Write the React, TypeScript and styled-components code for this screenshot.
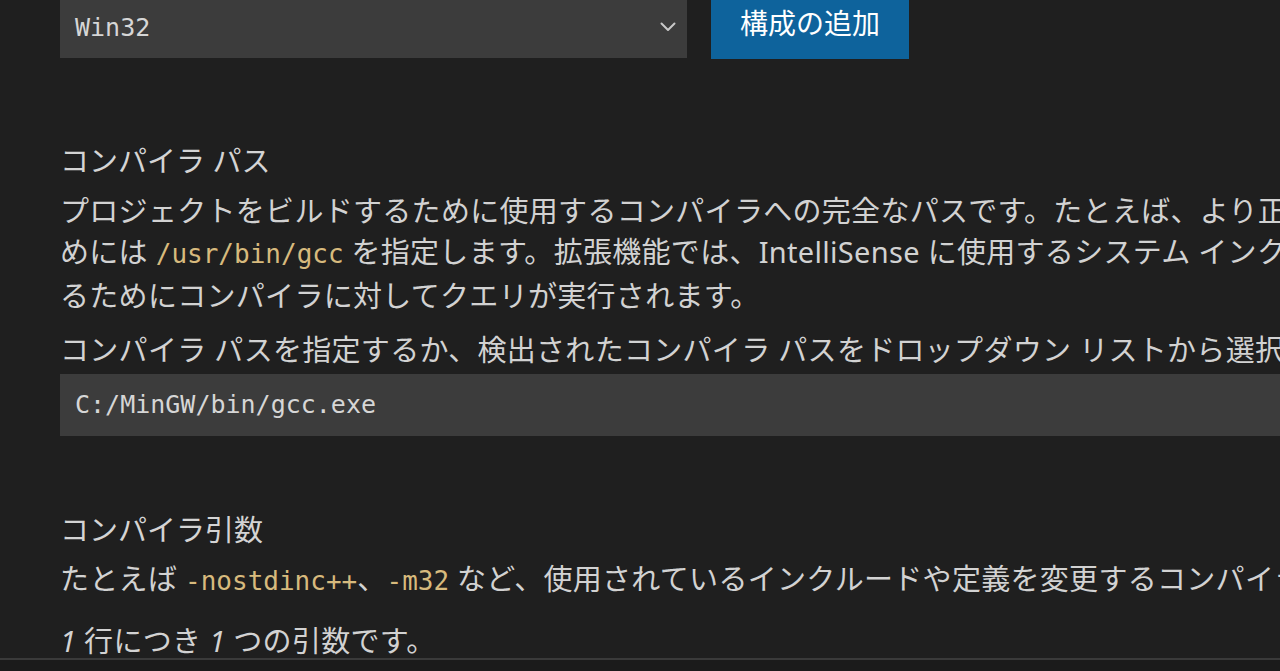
import React from "react";
import styled, { createGlobalStyle } from "styled-components";

const GlobalStyle = createGlobalStyle`
  html, body {
    margin: 0;
    padding: 0;
    background: #1f1f1f;
    overflow: hidden;
  }
  * { box-sizing: border-box; }
`;

const uiFont = `"Noto Sans", "Noto Sans CJK JP", sans-serif`;
const monoFont = `"DejaVu Sans Mono", "Liberation Mono", monospace`;

const Page = styled.div`
  width: 1280px;
  height: 671px;
  display: flex;
  flex-direction: column;
  background: #1f1f1f;
  color: #d2d2d2;
  font-family: ${uiFont};
  font-size: 29px;
  overflow: hidden;
`;

const Content = styled.div`
  flex: 1;
  padding-left: 60px;
  overflow: hidden;
  display: flex;
  flex-direction: column;
`;

const TopRow = styled.div`
  display: flex;
  gap: 24px;
  align-items: flex-start;
  height: 59px;
  flex-shrink: 0;
`;

const Select = styled.div`
  width: 627px;
  height: 58px;
  background: #3c3c3c;
  display: flex;
  align-items: center;
  justify-content: space-between;
  padding: 0 11px 4px 15px;
  font-family: ${monoFont};
  font-size: 25px;
  color: #d6d6d6;
`;

const Button = styled.div`
  width: 198px;
  height: 59px;
  background: #0e639c;
  color: #ffffff;
  display: flex;
  align-items: center;
  justify-content: center;
  font-size: 28px;
  padding-bottom: 16px;
`;

const Section = styled.div<{ $top: number }>`
  margin-top: ${(p) => p.$top}px;
  display: flex;
  flex-direction: column;
  flex-shrink: 0;
`;

const Title = styled.div`
  line-height: 41px;
  color: #d4d4d4;
  white-space: nowrap;
`;

const Text = styled.div<{ $top: number }>`
  margin-top: ${(p) => p.$top}px;
  line-height: 41px;
  color: #d2d2d2;
  white-space: nowrap;
  letter-spacing: 0.3px;
`;

const Code = styled.code`
  font-family: ${monoFont};
  font-size: 26px;
  letter-spacing: 0;
  color: #d7ba7d;
`;

const Num = styled.span`
  font-style: italic;
`;

const Input = styled.div`
  margin-top: 4px;
  height: 62px;
  background: #3c3c3c;
  display: flex;
  align-items: center;
  padding: 0 0 2px 15px;
  font-family: ${monoFont};
  font-size: 25px;
  color: #d6d6d6;
`;

const Footer = styled.div`
  height: 13px;
  flex-shrink: 0;
  border-top: 2px solid #3a3a3a;
  background: #1b1b1b;
`;

const Chevron = () => (
  <svg width="16" height="10" viewBox="0 0 16 10" fill="none">
    <polyline
      points="1.5,1.5 8,8 14.5,1.5"
      stroke="#c8c8c8"
      strokeWidth="2"
      strokeLinecap="round"
      strokeLinejoin="round"
    />
  </svg>
);

export default function App() {
  return (
    <>
      <GlobalStyle />
      <Page>
        <Content>
          <TopRow>
            <Select>
              <span>Win32</span>
              <Chevron />
            </Select>
            <Button>構成の追加</Button>
          </TopRow>

          <Section $top={81}>
            <Title>コンパイラ パス</Title>
            <Text $top={9}>
              プロジェクトをビルドするために使用するコンパイラへの完全なパスです。たとえば、より正確な IntelliSense を有効にするた
              <br />
              めには <Code>/usr/bin/gcc</Code> を指定します。拡張機能では、IntelliSense に使用するシステム インクルード パスと既定の定義を判断す
              <br />
              るためにコンパイラに対してクエリが実行されます。
            </Text>
            <Text $top={13}>
              コンパイラ パスを指定するか、検出されたコンパイラ パスをドロップダウン リストから選択します。
            </Text>
            <Input>C:/MinGW/bin/gcc.exe</Input>
          </Section>

          <Section $top={73}>
            <Title>コンパイラ引数</Title>
            <Text $top={8}>
              たとえば <Code>-nostdinc++</Code>、<Code>-m32</Code> など、使用されているインクルードや定義を変更するコンパイラ引数です。
            </Text>
            <Text $top={18}>
              <Num>1</Num> 行につき <Num>1</Num> つの引数です。
            </Text>
          </Section>
        </Content>
        <Footer />
      </Page>
    </>
  );
}
